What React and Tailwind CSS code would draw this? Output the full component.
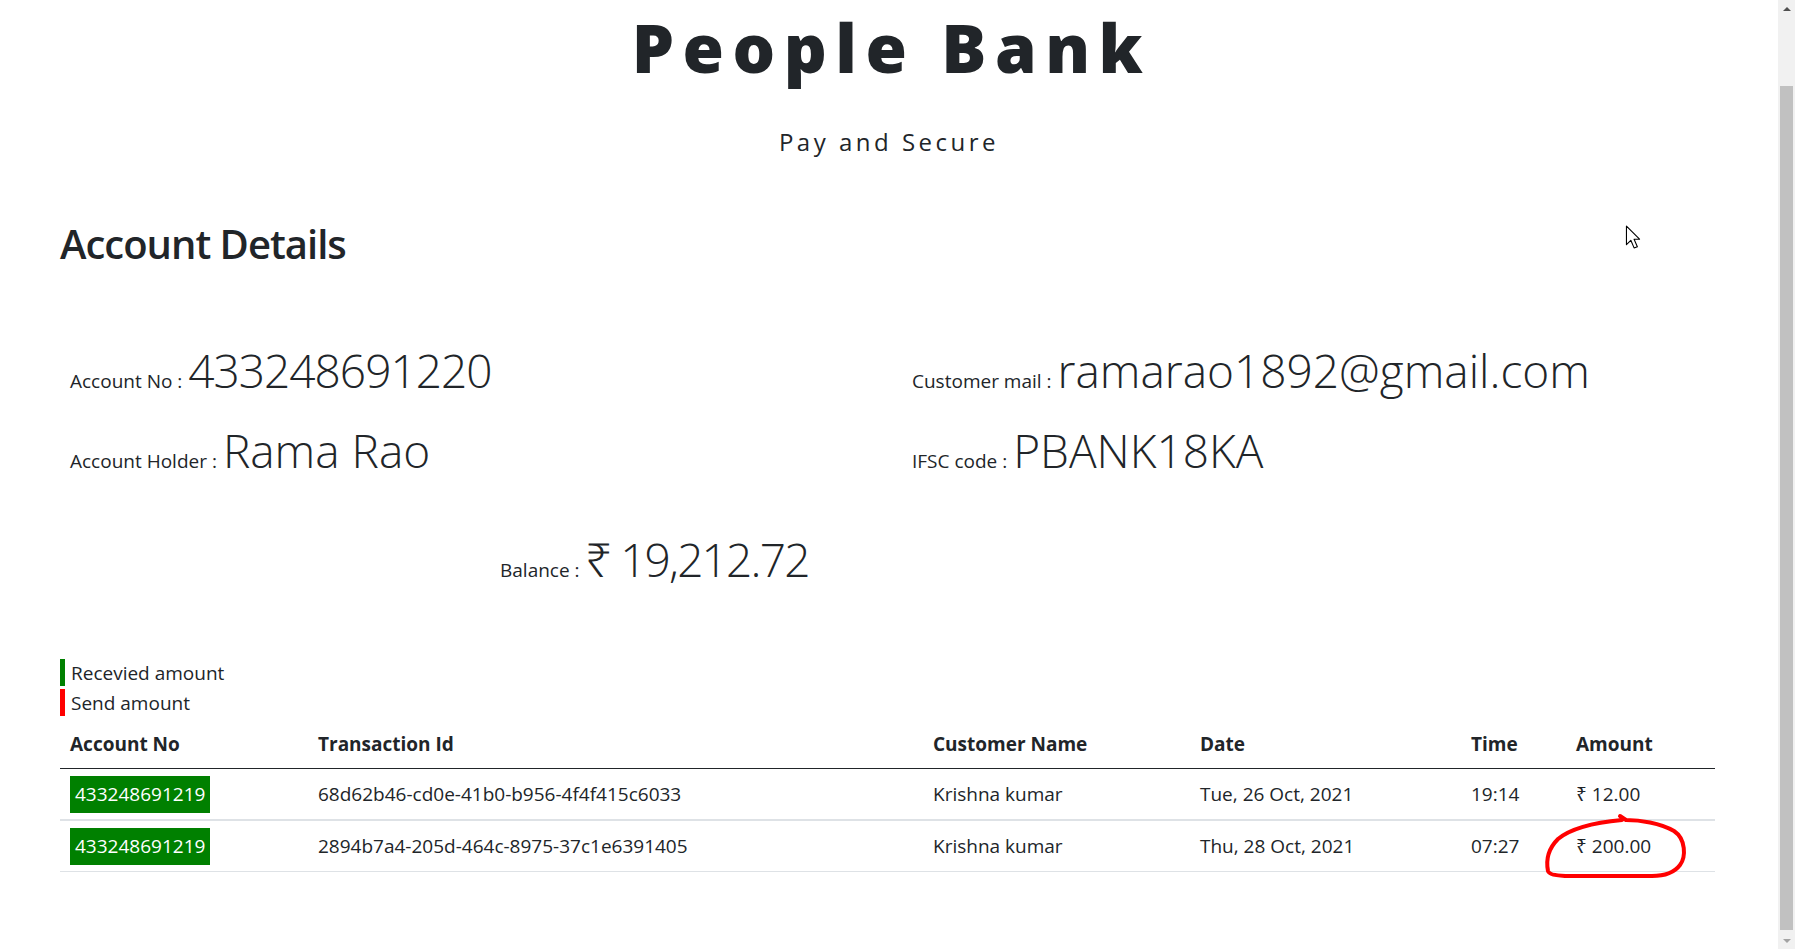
const transactions = [
  {
    account: "433248691219",
    id: "68d62b46-cd0e-41b0-b956-4f4f415c6033",
    name: "Krishna kumar",
    date: "Tue, 26 Oct, 2021",
    time: "19:14",
    amount: "₹ 12.00",
  },
  {
    account: "433248691219",
    id: "2894b7a4-205d-464c-8975-37c1e6391405",
    name: "Krishna kumar",
    date: "Thu, 28 Oct, 2021",
    time: "07:27",
    amount: "₹ 200.00",
    marked: true,
  },
]

function Info({ label, value, tracking = "" }) {
  return (
    <div className="flex h-[56px] items-baseline">
      <span className="mr-[6px] text-[19px]">{label}</span>
      <span className={`text-[46px] font-light leading-[56px] ${tracking}`}>{value}</span>
    </div>
  )
}

function Scrollbar() {
  return (
    <div className="flex w-[17px] flex-col bg-[#f1f1f1]">
      <div className="flex h-[17px] items-center justify-center">
        <div className="h-0 w-0 border-x-[4px] border-b-[4px] border-x-transparent border-b-[#505050]" />
      </div>
      <div className="mx-[2px] mb-[2px] mt-[69px] flex-1 bg-[#c1c1c1]" />
      <div className="flex h-[17px] items-center justify-center">
        <div className="h-0 w-0 border-x-[4px] border-t-[4px] border-x-transparent border-t-[#a3a3a3]" />
      </div>
    </div>
  )
}

export default function App() {
  return (
    <div className="flex h-[949px] overflow-hidden bg-white text-[#212529] font-['Open_Sans','Noto_Sans','DejaVu_Sans',sans-serif]">
      <main className="relative flex-1 pl-[60px] pr-[63px]">
        <h1 className="pl-[8px] text-center text-[67px] font-extrabold leading-[95px] tracking-[8.5px]">People Bank</h1>
        <p className="mt-[29px] pl-[3px] text-center text-[24px] leading-[36px] tracking-[3.5px]">Pay and Secure</p>

        <h2 className="mt-[60px] text-[40px] font-semibold leading-[48px] tracking-[-1px]">Account Details</h2>

        <div className="mt-[74px] grid grid-cols-[842px_1fr] gap-y-[24px] pl-[10px]">
          <Info label="Account No :" value="433248691220" tracking="tracking-[-1px]" />
          <Info label="Customer mail :" value="ramarao1892@gmail.com" />
          <Info label="Account Holder :" value="Rama Rao" />
          <Info label="IFSC code :" value="PBANK18KA" />
        </div>

        <div className="mt-[53px] pl-[440px]">
          <Info label="Balance :" value="₹ 19,212.72" tracking="tracking-[-1.8px]" />
        </div>

        <div className="mt-[72px] text-[19px]">
          <div className="h-[27px] border-l-[5px] border-[#008000] pl-[6px] leading-[29px]">Recevied amount</div>
          <div className="mt-[3px] h-[27px] border-l-[5px] border-[#ff0000] pl-[6px] leading-[29px]">Send amount</div>
        </div>

        <table className="mt-[5px] w-full table-fixed border-separate border-spacing-0 text-[19px]">
          <thead>
            <tr className="text-left">
              <th className="w-[248px] border-b border-[#212529] pb-[10px] pl-[10px] pt-[9px] font-bold leading-[28px]">Account No</th>
              <th className="w-[615px] border-b border-[#212529] pb-[10px] pl-[10px] pt-[9px] font-bold leading-[28px]">Transaction Id</th>
              <th className="w-[267px] border-b border-[#212529] pb-[10px] pl-[10px] pt-[9px] font-bold leading-[28px]">Customer Name</th>
              <th className="w-[271px] border-b border-[#212529] pb-[10px] pl-[10px] pt-[9px] font-bold leading-[28px]">Date</th>
              <th className="w-[105px] border-b border-[#212529] pb-[10px] pl-[10px] pt-[9px] font-bold leading-[28px]">Time</th>
              <th className="border-b border-[#212529] pb-[10px] pl-[10px] pt-[9px] font-bold leading-[28px]">Amount</th>
            </tr>
          </thead>
          <tbody>
            {transactions.map((t, i) => {
              const cell =
                i === 0
                  ? "h-[52px] border-b-2 border-[#dee2e6] pl-[10px] align-middle leading-[28px]"
                  : "h-[51px] border-b border-[#dee2e6] pl-[10px] align-middle leading-[28px]"
              return (
                <tr key={t.id}>
                  <td className={cell}>
                    <span className="inline-block h-[37px] bg-[#008000] px-[5px] align-middle leading-[37px] text-white">
                      {t.account}
                    </span>
                  </td>
                  <td className={cell}>{t.id}</td>
                  <td className={cell}>{t.name}</td>
                  <td className={cell}>{t.date}</td>
                  <td className={cell}>{t.time}</td>
                  <td className={`${cell} relative`}>
                    {t.amount}
                    {t.marked && (
                      <svg
                        className="absolute left-[-26px] top-[-12px]"
                        width="150"
                        height="75"
                        viewBox="0 0 150 75"
                        fill="none"
                      >
                        <path
                          d="M80 7 L86 11 C100 11 120 14 134 22 C146 30 146 48 140 56 C134 64 124 67 112 67 L30 67 C18 67 9 66 8 62 C6 52 8 40 18 30 C30 20 50 14 82 11"
                          stroke="#ff0000"
                          strokeWidth="4"
                          strokeLinecap="round"
                          strokeLinejoin="round"
                        />
                      </svg>
                    )}
                  </td>
                </tr>
              )
            })}
          </tbody>
        </table>

        <svg className="absolute left-[1625px] top-[225px]" width="16" height="24" viewBox="0 0 14 22">
          <path d="M1 1 L1 18 L5 14 L8 21 L11 20 L8 13 L13 13 Z" fill="#ffffff" stroke="#000000" strokeWidth="1" strokeLinejoin="round" />
        </svg>
      </main>
      <Scrollbar />
    </div>
  )
}
